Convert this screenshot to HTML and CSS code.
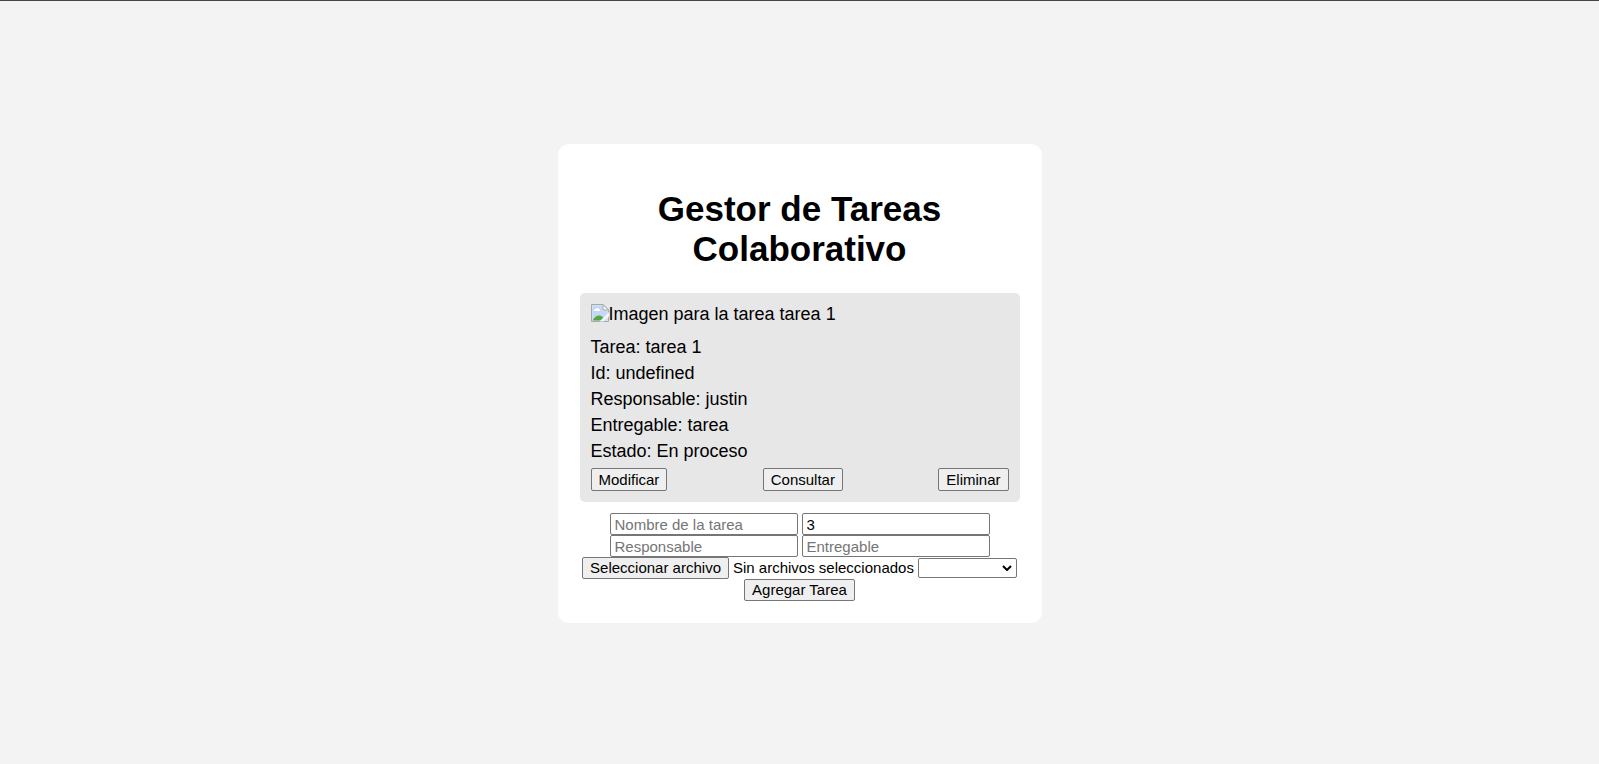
FILE: index.html
```html
<!DOCTYPE html>
<html lang="es">
<head>
<meta charset="utf-8">
<meta name="viewport" content="width=device-width, initial-scale=1">
<title>Gestor de Tareas Colaborativo</title>
<link rel="stylesheet" href="styles.css">
</head>
<body>
<main class="card">
  <h1 class="title">Gestor de Tareas Colaborativo</h1>
  <article class="task">
    <div class="task-image">
      <svg class="broken" width="18" height="18" viewBox="0 0 18 18" aria-hidden="true">
        <path d="M.5.5h11.500l5.500 5.500v11.500H.5z" fill="#dfe8f8" stroke="#a8a8a8"/>
        <path d="M1.500 1.500h10v5.500h5v9.500h-15z" fill="#c3d7f6"/>
        <path d="M3 7a1.500 1.500 0 0 1 1.500-2 2 2 0 0 1 3.500 0 1.500 1.500 0 0 1 1 2z" fill="#fff"/>
        <path d="M1.500 16.500c1.500-3 4-5 6.500-5 2.500 0 4 1.500 5 3v2z" fill="#53a93f"/>
        <path d="M12 .5V6h5.500z" fill="#f6f6f6" stroke="#a8a8a8"/>
        <path d="M18 8 8.500 17.500h4L18 12.500z" fill="#f4f4f4"/>
      </svg>
      <span>Imagen para la tarea tarea 1</span>
    </div>
    <p class="line">Tarea: tarea 1</p>
    <p class="line">Id: undefined</p>
    <p class="line">Responsable: justin</p>
    <p class="line">Entregable: tarea</p>
    <p class="line">Estado: En proceso</p>
    <div class="actions">
      <button class="btn" type="button">Modificar</button>
      <button class="btn" type="button">Consultar</button>
      <button class="btn" type="button">Eliminar</button>
    </div>
  </article>
  <form class="form">
    <div class="row">
      <input class="field" type="text" placeholder="Nombre de la tarea" aria-label="Nombre de la tarea">
      <input class="field" type="text" value="3" aria-label="Id">
    </div>
    <div class="row">
      <input class="field" type="text" placeholder="Responsable" aria-label="Responsable">
      <input class="field" type="text" placeholder="Entregable" aria-label="Entregable">
    </div>
    <div class="row">
      <input class="file-input" type="file" id="archivo">
      <label class="btn" for="archivo">Seleccionar archivo</label>
      <span class="file-name">Sin archivos seleccionados</span>
      <span class="select-wrap">
        <select class="select" aria-label="Estado"><option value=""></option></select>
        <svg class="chevron" width="10" height="6" viewBox="0 0 10 6" aria-hidden="true"><path d="M1 1l4 4 4-4" fill="none" stroke="#000" stroke-width="2"/></svg>
      </span>
    </div>
    <div class="row">
      <button class="btn" type="button">Agregar Tarea</button>
    </div>
  </form>
</main>
</body>
</html>
```
FILE: styles.css
```css
* {
  box-sizing: border-box;
}

body {
  margin: 0;
  min-height: 100vh;
  display: flex;
  align-items: center;
  justify-content: center;
  padding-top: 2px;
  border-top: 1px solid #444;
  background: #f3f3f3;
  color: #000;
  font: 18px/20px "Liberation Sans", Arial, sans-serif;
}

.card {
  width: 484px;
  max-width: 100%;
  padding: 22px;
  border-radius: 11px;
  background: #fff;
}

.title {
  margin: 23px 0 24px;
  font-size: 35px;
  line-height: 40px;
  text-align: center;
}

.task {
  padding: 11px;
  margin-bottom: 11px;
  border-radius: 5px;
  background: #e7e7e7;
}

.task-image {
  display: flex;
  margin-bottom: 10px;
}

.broken {
  flex: none;
}

.line {
  margin: 0;
  line-height: 26px;
}

.actions {
  display: flex;
  justify-content: space-between;
  margin-top: 4px;
}

.btn {
  padding: 0 7px;
  border: 1px solid #767676;
  border-radius: 2px;
  background: #efefef;
  color: #000;
  font: 15px/20px "Liberation Sans", Arial, sans-serif;
}

.actions .btn {
  line-height: 21px;
}

.row {
  display: flex;
  align-items: center;
  justify-content: center;
  gap: 4px;
  font-size: 15px;
}

.field {
  width: 188px;
  height: 22px;
  padding: 0 4px;
  border: 1px solid #767676;
  border-radius: 2px;
  background: #fff;
  color: #000;
  font: 15px "Liberation Sans", Arial, sans-serif;
}

.field::placeholder {
  color: #757575;
}

.file-input {
  position: absolute;
  width: 1px;
  height: 1px;
  opacity: 0;
}

.file-name {
  white-space: nowrap;
}

.row label {
  white-space: nowrap;
}

.select-wrap {
  position: relative;
  display: flex;
}

.select {
  appearance: none;
  width: 99px;
  height: 20px;
  border: 1px solid #767676;
  border-radius: 2px;
  background: #fff;
  font: 15px "Liberation Sans", Arial, sans-serif;
}

.chevron {
  position: absolute;
  top: 7px;
  right: 5px;
  pointer-events: none;
}
```
